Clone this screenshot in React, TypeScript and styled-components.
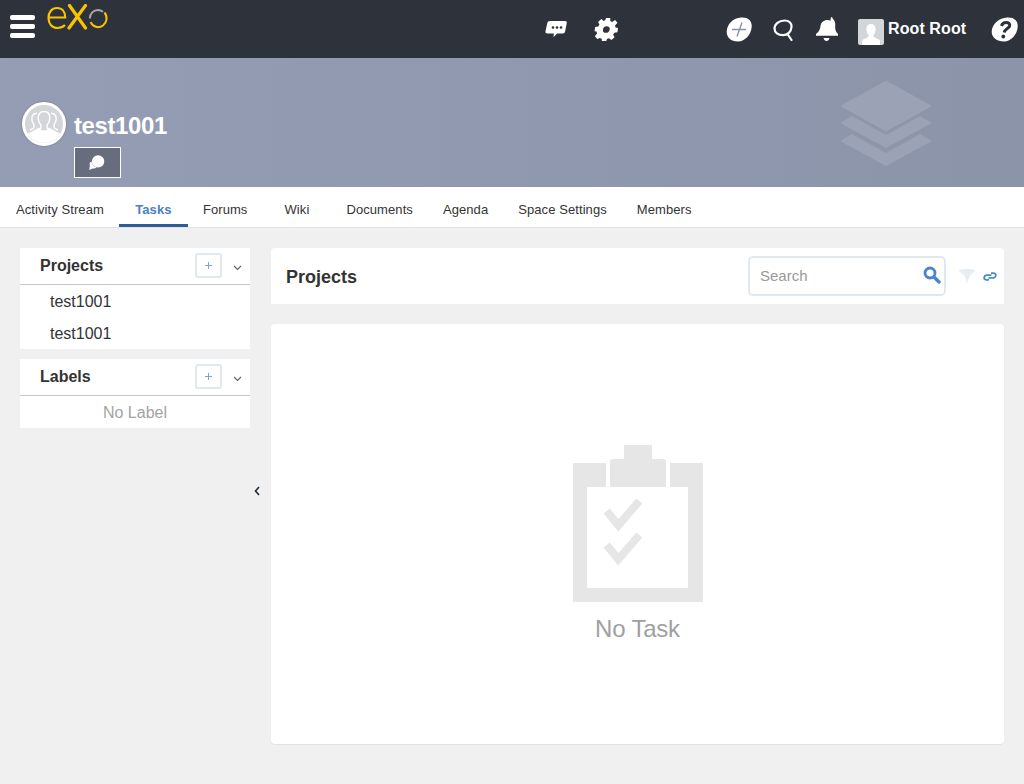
import React from 'react'
import styled, { createGlobalStyle } from 'styled-components'

const GlobalStyle = createGlobalStyle`
  html, body {
    margin: 0;
    padding: 0;
    height: 100%;
    background: #f0f0f0;
    font-family: "Liberation Sans", Arial, sans-serif;
    color: #333;
    overflow: hidden;
  }
`

const tabs = ['Activity Stream', 'Tasks', 'Forums', 'Wiki', 'Documents', 'Agenda', 'Space Settings', 'Members']

const Page = styled.div`
  display: flex;
  flex-direction: column;
  height: 784px;
`

const TopBar = styled.header`
  display: flex;
  align-items: flex-start;
  flex: 0 0 58px;
  height: 58px;
  background: #2d323b;
  box-sizing: border-box;
  color: #fff;
`

const Burger = styled.div`
  display: flex;
  flex-direction: column;
  gap: 4px;
  width: 25px;
  margin: 15px 0 0 10px;
  span {
    display: block;
    height: 5px;
    border-radius: 2px;
    background: #fff;
  }
`

const Logo = styled.svg`
  display: block;
  width: 62px;
  height: 26px;
  margin: 4px 0 0 12px;
`

const TopIcon = styled.svg<{ $w: number; $h: number; $top: number; $left: number }>`
  display: block;
  flex: none;
  width: ${p => p.$w}px;
  height: ${p => p.$h}px;
  margin-top: ${p => p.$top}px;
  margin-left: ${p => p.$left}px;
`

const UserAvatar = styled.div`
  flex: none;
  width: 26px;
  height: 26px;
  margin: 19px 0 0 20px;
  border-radius: 2px;
  background: #d3d6d9;
  overflow: hidden;
  svg {
    display: block;
  }
`

const UserName = styled.span`
  margin: 19px 0 0 4px;
  font-size: 16px;
  line-height: 19px;
  font-weight: 700;
  letter-spacing: 0.1px;
  white-space: nowrap;
`

const Banner = styled.section`
  position: relative;
  flex: 0 0 129px;
  display: flex;
  align-items: flex-start;
  padding: 44px 0 0 22px;
  box-sizing: border-box;
  background: linear-gradient(90deg, #959db5 0%, #8c94aa 100%);
`

const SpaceAvatar = styled.div`
  width: 38px;
  height: 38px;
  border: 3px solid #fff;
  border-radius: 50%;
  background: #d3d6d9;
  overflow: hidden;
  box-shadow: 0 0 2px rgba(0, 0, 0, 0.3);
  svg {
    display: block;
  }
`

const SpaceInfo = styled.div`
  margin-left: 8px;
`

const SpaceName = styled.h1`
  margin: 10px 0 0;
  font-size: 24px;
  line-height: 28px;
  font-weight: 700;
  letter-spacing: -0.4px;
  color: #fff;
`

const ChatButton = styled.button`
  display: flex;
  align-items: center;
  justify-content: center;
  width: 47px;
  height: 31px;
  margin-top: 7px;
  padding: 0 2px 0 0;
  border: 1px solid #fff;
  background: #676d7d;
`

const BannerMark = styled.svg`
  position: absolute;
  left: 840px;
  top: 22px;
  width: 92px;
  height: 88px;
`

const TabBar = styled.nav`
  display: flex;
  flex: 0 0 41px;
  box-sizing: border-box;
  background: #fff;
  border-bottom: 1px solid #e3e3e3;
`

const Tab = styled.a<{ $active?: boolean }>`
  box-sizing: border-box;
  min-width: 69px;
  height: 40px;
  padding: 0 15px;
  text-align: center;
  font-size: 13px;
  line-height: 45px;
  letter-spacing: 0.08px;
  font-weight: ${p => (p.$active ? 700 : 400)};
  color: ${p => (p.$active ? '#4a7fc1' : '#333')};
  border-bottom: 3px solid ${p => (p.$active ? '#2f5e92' : 'transparent')};
  &:first-child {
    padding-left: 16px;
    min-width: 0;
  }
`

const Content = styled.main`
  position: relative;
  flex: 1;
  display: flex;
  gap: 21px;
  padding: 20px;
`

const Sidebar = styled.aside`
  display: flex;
  flex-direction: column;
  gap: 10px;
  flex: 0 0 230px;
`

const SideCard = styled.section`
  background: #fff;
`

const SideHeader = styled.div`
  display: flex;
  align-items: center;
  height: 36px;
  padding-left: 20px;
  border-bottom: 1px solid #c8c8c8;
`

const SideTitle = styled.h2`
  flex: 1;
  margin: 0;
  font-size: 16px;
  line-height: 19px;
  font-weight: 700;
  position: relative;
  top: -1px;
`

const AddButton = styled.button`
  display: flex;
  align-items: center;
  justify-content: center;
  box-sizing: border-box;
  width: 27px;
  height: 25px;
  padding: 0;
  border: 2px solid #e1e8ee;
  border-radius: 3px;
  background: #fff;
  position: relative;
  top: -1px;
`

const Chevron = styled.svg`
  width: 9px;
  height: 6px;
  margin: 3px 8px 0 11px;
`

const SideItem = styled.div`
  height: 32px;
  padding-left: 30px;
  font-size: 16px;
  line-height: 33px;
  color: #333;
`

const SideEmpty = styled.div`
  height: 32px;
  text-align: center;
  font-size: 16px;
  line-height: 34px;
  color: #a3a3a3;
`

const CollapseArrow = styled.svg`
  position: absolute;
  left: 254px;
  top: 258px;
  width: 6px;
  height: 10px;
`

const MainColumn = styled.div`
  flex: 1;
  display: flex;
  flex-direction: column;
  gap: 20px;
`

const Toolbar = styled.div`
  display: flex;
  align-items: center;
  height: 56px;
  padding: 0 7px 0 15px;
  background: #fff;
  border-radius: 4px 4px 0 0;
`

const ToolbarTitle = styled.h2`
  flex: 1;
  margin: 2px 0 0;
  font-size: 18px;
  font-weight: 700;
  color: #333;
`

const SearchBox = styled.div`
  display: flex;
  align-items: center;
  box-sizing: border-box;
  width: 198px;
  height: 40px;
  padding: 0 3px 0 10px;
  border: 2px solid #e1e8ee;
  border-radius: 5px;
`

const SearchInput = styled.input`
  flex: 1;
  min-width: 0;
  margin-bottom: 2px;
  border: 0;
  outline: 0;
  padding: 0;
  font-family: inherit;
  font-size: 15px;
  color: #333;
  &::placeholder {
    color: #999;
    opacity: 1;
  }
`

const SearchGlyph = styled.svg`
  flex: none;
  margin-bottom: 3px;
`

const FilterIcon = styled.svg`
  width: 16px;
  height: 16px;
  margin-left: 13px;
`

const LinkIcon = styled.svg`
  width: 14px;
  height: 9px;
  margin-left: 8px;
`

const EmptyPanel = styled.section`
  flex: 1;
  display: flex;
  flex-direction: column;
  align-items: center;
  padding-top: 121px;
  margin-bottom: 20px;
  background: #fff;
  border-radius: 4px;
  box-shadow: 0 1px 1px rgba(0, 0, 0, 0.06);
`

const ClipboardArt = styled.svg`
  display: block;
  width: 130px;
  height: 157px;
`

const EmptyText = styled.div`
  margin-top: 12px;
  font-size: 24px;
  line-height: 29px;
  letter-spacing: -0.2px;
  color: #a0a0a0;
`

const PersonIcon = ({ size }: { size: number }) => (
  <svg width={size} height={size} viewBox="0 0 26 26">
    <path
      fill="#fff"
      d="M13 5c3 0 4.600 2.200 4.600 5.400 0 2.300-.9 4.300-2.100 5.400v1.500c0 .8 1.200 1.300 3.300 2.100 2.300.9 3.200 1.700 3.200 3.100V26H4v-3.500c0-1.400.9-2.200 3.200-3.100 2.100-.8 3.300-1.300 3.300-2.100v-1.500c-1.200-1.100-2.100-3.100-2.100-5.400C8.400 7.200 10 5 13 5z"
    />
  </svg>
)

const GroupIcon = () => (
  <svg width="38" height="38" viewBox="0 0 38 38">
    <path fill="#fff" d="M0 30l9-4.500 5-3 2 2.500h6l2-2.500 5 3 9 4.500v8H0z" />
    <path
      fill="#d3d6d9"
      stroke="#fff"
      strokeWidth="1.400"
      d="M19 6.500c3.800 0 5.800 2.700 5.800 6.500 0 3-1.200 5.400-2.700 6.900v3.400c0 1.100 1 1.800 3.200 2.700H12.700c2.200-.9 3.200-1.600 3.200-2.700v-3.400c-1.500-1.500-2.700-3.900-2.700-6.900 0-3.800 2-6.500 5.800-6.500z"
    />
    <path
      fill="none"
      stroke="#fff"
      strokeWidth="1.400"
      d="M11.800 8.200C8.500 8.400 6.800 10.800 6.800 14c0 2.400.9 4.400 2.100 5.600v2.600c0 1-1.600 1.800-4 2.800M26.200 8.200c3.300.2 5 2.600 5 5.800 0 2.400-.9 4.400-2.100 5.600v2.600c0 1 1.600 1.800 4 2.800"
    />
  </svg>
)

const AddMark = () => (
  <svg width="7" height="7" viewBox="0 0 7 7">
    <path stroke="#7fa3d8" strokeWidth="1" d="M0 3.500h7M3.500 0v7" />
  </svg>
)

const DownChevron = () => (
  <Chevron viewBox="0 0 9 6">
    <path fill="none" stroke="#666" strokeWidth="1.200" d="M1 1l3.500 3.500L8 1" />
  </Chevron>
)

export default function App() {
  return (
    <Page>
      <GlobalStyle />
      <TopBar>
        <Burger>
          <span />
          <span />
          <span />
        </Burger>
        <Logo viewBox="0 0 62 26">
          <path
            fill="none"
            stroke="#fbc300"
            strokeWidth="2.200"
            d="M2 13.500h16.200C18.200 7.500 15 4 10 4 4.800 4 1.500 8 1.500 14s3.500 10 9 10c3 0 5.500-1 7.500-3"
          />
          <path fill="none" stroke="#fbc300" strokeWidth="3.200" strokeLinecap="round" d="M22.500 1.500L38.500 24M38.500 1.500L22 24" />
          <path fill="none" stroke="#fbc300" strokeWidth="2" d="M57.500 8.500C60.800 12.500 60 18.500 56 21.500c-4.500 3.200-10.500 1.500-12.300-3.500" />
          <path fill="none" stroke="#a8a8a8" strokeWidth="2" d="M42.800 14.500C42.800 9.500 46.500 6 51 6c2 0 3.500.6 5 1.700" />
        </Logo>
        <TopIcon $w={22} $h={18} $top={20} $left={436} viewBox="0 0 22 18">
          <path
            fill="#fff"
            d="M5 1h15c1.300 0 2 .8 1.800 2l-1.700 8.500c-.3 1.300-1 2-2.300 2H12l-3.500 3.700.3-3.700H2.500C1 13.500.2 12.700.5 11.300L2.300 3C2.600 1.700 3.500 1 5 1z"
          />
          <circle cx="8" cy="7.500" r="1.300" fill="#2d323b" />
          <circle cx="12" cy="7.500" r="1.300" fill="#2d323b" />
          <circle cx="16" cy="7.500" r="1.300" fill="#2d323b" />
        </TopIcon>
        <TopIcon $w={24} $h={23} $top={18} $left={27} viewBox="0 0 24 24">
          <g transform="translate(2 0) skewX(-8)">
            <path
              fill="#fff"
              fillRule="evenodd"
              d="M10 0h4.500l.4 3.200 2.100.9L19.700 2l3 3-2.200 2.800.9 2.100 2.600.6v4.300l-3.200.5-.9 2.100 1.900 2.600-3 3-2.700-2-2.100.9-.5 3.100H9.200l-.5-3.200-2.100-.9L4 22l-3-3 2-2.700-.9-2.100L0 13.700V9.400l3.200-.5.9-2.100L2.300 4.100l3-3L8 3.100l1.500-.7L10 0zm2 8.500a3.500 3.500 0 1 0 0 7 3.500 3.500 0 0 0 0-7z"
            />
          </g>
        </TopIcon>
        <TopIcon $w={26} $h={25} $top={17} $left={108} viewBox="0 0 26 25">
          <path fill="#fff" d="M15 .5c7-.5 11 3 10.700 9-.4 8-6.500 15-13.700 15C5 24.500.5 20.500.7 14.500 1 6.800 7.500 1 15 .5z" />
          <path stroke="#8a93a6" strokeWidth="1.400" d="M16 5.500l-5 14M6 12.500h14" />
        </TopIcon>
        <TopIcon $w={21} $h={22} $top={19} $left={21} viewBox="0 0 21 22">
          <path
            fill="none"
            stroke="#fff"
            strokeWidth="2.200"
            strokeLinecap="round"
            d="M11.500 1.500c4.500 0 7.300 2.500 7 6.500-.3 4.700-4 8.200-8.500 8.200-5 0-8.500-2.600-8.500-6.700C1.500 5.300 6 1.500 11.500 1.500zM14.500 15l4 6"
          />
        </TopIcon>
        <TopIcon $w={22} $h={24} $top={17} $left={22} viewBox="0 0 22 24">
          <path
            fill="#fff"
            d="M15.500 0c1 .2 1.300 1 1.200 1.800 2.300 1.700 2.800 4.300 2.500 7-.3 3.300.4 6 2.800 8.200v1.800H0V17c3-2.200 4.200-4.600 4.500-8C4.900 5.500 7.700 3 11.500 3c1.200 0 2.200.3 3 .8 0-1.500 0-3 1-3.800zM7.500 21h6c-.5 2-1.500 3-3 3s-2.500-1-3-3z"
          />
        </TopIcon>
        <UserAvatar>
          <PersonIcon size={26} />
        </UserAvatar>
        <UserName>Root Root</UserName>
        <TopIcon $w={27} $h={25} $top={17} $left={25} viewBox="0 0 27 25">
          <path fill="#fff" d="M16 .5c7-.5 11 3 10.700 9-.4 8-6.500 15-13.700 15C6 24.500 .5 20.500.7 14.500 1 6.800 8.500 1 16 .5z" />
          <path
            fill="none"
            stroke="#2d323b"
            strokeWidth="3"
            d="M10.500 9c.6-2.300 2.500-3.500 4.700-3.500 2.500 0 3.800 1.400 3.500 3.300-.4 2.700-4.800 3-5.500 6.700"
          />
          <circle cx="12.300" cy="19.500" r="1.900" fill="#2d323b" />
        </TopIcon>
      </TopBar>

      <Banner>
        <SpaceAvatar>
          <GroupIcon />
        </SpaceAvatar>
        <SpaceInfo>
          <SpaceName>test1001</SpaceName>
          <ChatButton>
            <svg width="17" height="16" viewBox="0 0 16 15">
              <circle cx="9.500" cy="6" r="5.800" fill="#fff" />
              <path fill="#fff" d="M1.500 7.500L3.200 6c.6 2.700 2.500 4.800 5 5.800-1.300 1-2.600 1.200-3.700.8L1 14c.8-2 .8-4.500.5-6.500z" />
            </svg>
          </ChatButton>
        </SpaceInfo>
        <BannerMark viewBox="0 0 92 88">
          <g fill="#9ba2b5" stroke="#9ba2b5" strokeWidth="1" strokeLinejoin="round">
            <path d="M1 43l11-6.500 34 19 34-19 11 6.500-45 24.500z" />
            <path d="M1 61l11-6.500 34 19 34-19 11 6.500-45 24.500z" />
            <path d="M46 1l45 25-45 25L1 26z" />
          </g>
        </BannerMark>
      </Banner>

      <TabBar>
        {tabs.map(tab => (
          <Tab key={tab} $active={tab === 'Tasks'}>
            {tab}
          </Tab>
        ))}
      </TabBar>

      <Content>
        <Sidebar>
          <SideCard>
            <SideHeader>
              <SideTitle>Projects</SideTitle>
              <AddButton>
                <AddMark />
              </AddButton>
              <DownChevron />
            </SideHeader>
            <SideItem>test1001</SideItem>
            <SideItem>test1001</SideItem>
          </SideCard>
          <SideCard>
            <SideHeader>
              <SideTitle>Labels</SideTitle>
              <AddButton>
                <AddMark />
              </AddButton>
              <DownChevron />
            </SideHeader>
            <SideEmpty>No Label</SideEmpty>
          </SideCard>
        </Sidebar>
        <CollapseArrow viewBox="0 0 6 10">
          <path fill="none" stroke="#1f2a38" strokeWidth="1.600" d="M5 1L1.500 5 5 9" />
        </CollapseArrow>
        <MainColumn>
          <Toolbar>
            <ToolbarTitle>Projects</ToolbarTitle>
            <SearchBox>
              <SearchInput placeholder="Search" />
              <SearchGlyph width="18" height="18" viewBox="0 0 18 18">
                <circle cx="7" cy="7" r="5" fill="none" stroke="#4a84c9" strokeWidth="2.800" />
                <path stroke="#4a84c9" strokeWidth="3.400" strokeLinecap="round" d="M11.500 11.500l4.500 4.500" />
              </SearchGlyph>
            </SearchBox>
            <FilterIcon viewBox="0 0 16 16">
              <path fill="#e8edf2" d="M0 2.500C1 .5 15 .5 16 2.500c-.5 2-3.500 3-5 5.500-.8 1.300-1.500 4.500-4 8 .3-3-.2-5.500-1-7.500C5 6 .8 5 0 2.500z" />
            </FilterIcon>
            <LinkIcon viewBox="0 0 14 9">
              <path
                fill="none"
                stroke="#4a8ad0"
                strokeWidth="1.800"
                d="M6 7.800H3.500C1.800 7.800 1 7 1.200 5.500c.2-1.500 1.200-2.300 2.800-2.300h4.500M8 1.200h2.500c1.700 0 2.500.8 2.300 2.300-.2 1.500-1.200 2.300-2.800 2.300H5.500"
              />
            </LinkIcon>
          </Toolbar>
          <EmptyPanel>
            <ClipboardArt viewBox="0 0 130 157">
              <path fill="#e6e6e6" d="M0 18h33v24H14v101h101V42H97V18h33v139H0z" />
              <path fill="#e6e6e6" d="M37 42V17c0-2 1-3 3-3h11V0h28v14h11c2 0 3 1 3 3v25z" />
              <path fill="none" stroke="#e6e6e6" strokeWidth="8" d="M33.700 66l11.600 14.300L66.300 56M33.700 100l11.600 14.300L66.300 90" />
            </ClipboardArt>
            <EmptyText>No Task</EmptyText>
          </EmptyPanel>
        </MainColumn>
      </Content>
    </Page>
  )
}
